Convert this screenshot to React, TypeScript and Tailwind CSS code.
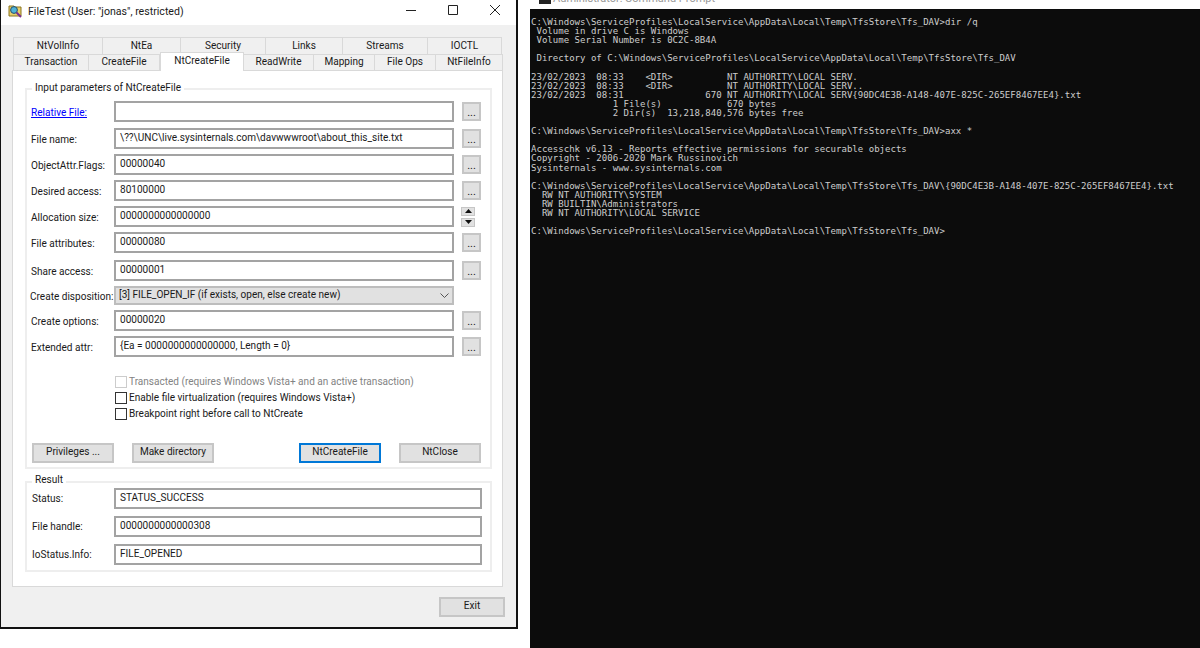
const tabsTop = [
  { label: "NtVolInfo", width: "w-[90px]" },
  { label: "NtEa", width: "w-[78px]" },
  { label: "Security", width: "w-[85px]" },
  { label: "Links", width: "w-[77px]" },
  { label: "Streams", width: "w-[85px]" },
  { label: "IOCTL", width: "w-[74px]" },
];

const tabsBottom = [
  { label: "Transaction", width: "w-[76px]" },
  { label: "CreateFile", width: "w-[71px]" },
  { label: "NtCreateFile", width: "w-[84px]", active: true },
  { label: "ReadWrite", width: "w-[70px]" },
  { label: "Mapping", width: "w-[61px]" },
  { label: "File Ops", width: "w-[61px]" },
  { label: "NtFileInfo", width: "w-[67px]" },
];

const consoleLines = [
  "C:\\Windows\\ServiceProfiles\\LocalService\\AppData\\Local\\Temp\\TfsStore\\Tfs_DAV>dir /q",
  " Volume in drive C is Windows",
  " Volume Serial Number is 0C2C-8B4A",
  "",
  " Directory of C:\\Windows\\ServiceProfiles\\LocalService\\AppData\\Local\\Temp\\TfsStore\\Tfs_DAV",
  "",
  "23/02/2023  08:33    <DIR>          NT AUTHORITY\\LOCAL SERV.",
  "23/02/2023  08:33    <DIR>          NT AUTHORITY\\LOCAL SERV..",
  "23/02/2023  08:31               670 NT AUTHORITY\\LOCAL SERV{90DC4E3B-A148-407E-825C-265EF8467EE4}.txt",
  "               1 File(s)            670 bytes",
  "               2 Dir(s)  13,218,840,576 bytes free",
  "",
  "C:\\Windows\\ServiceProfiles\\LocalService\\AppData\\Local\\Temp\\TfsStore\\Tfs_DAV>axx *",
  "",
  "Accesschk v6.13 - Reports effective permissions for securable objects",
  "Copyright - 2006-2020 Mark Russinovich",
  "Sysinternals - www.sysinternals.com",
  "",
  "C:\\Windows\\ServiceProfiles\\LocalService\\AppData\\Local\\Temp\\TfsStore\\Tfs_DAV\\{90DC4E3B-A148-407E-825C-265EF8467EE4}.txt",
  "  RW NT AUTHORITY\\SYSTEM",
  "  RW BUILTIN\\Administrators",
  "  RW NT AUTHORITY\\LOCAL SERVICE",
  "",
  "C:\\Windows\\ServiceProfiles\\LocalService\\AppData\\Local\\Temp\\TfsStore\\Tfs_DAV>",
];

const inputClass =
  "flex h-[21px] w-[340px] items-center border-2 border-[#a3a3a3] bg-white pb-[2px] pl-[4px] whitespace-nowrap";
const buttonClass =
  "flex items-center justify-center border-2 border-[#c6c6c6] bg-[#e1e1e1] pb-[2px] text-[#1a1a1a]";

function Tab({ label, width, active, short }: { label: string; width: string; active?: boolean; short?: boolean }) {
  if (active) {
    return (
      <div
        className={`${width} relative z-10 -mt-[2px] flex h-[19px] items-center justify-center border border-b-0 border-[#d9d9d9] bg-white pb-[3px]`}
      >
        {label}
      </div>
    );
  }
  return (
    <div
      className={`${width} flex ${short ? "h-[16px] pb-[1px]" : "h-[17px]"} items-center justify-center border-t border-r border-[#d9d9d9] bg-[#f0f0f0] first:border-l`}
    >
      {label}
    </div>
  );
}

function Dots() {
  return (
    <button className="ml-[8px] flex h-[19px] w-[19px] items-center justify-center border-2 border-[#c6c6c6] bg-[#e1e1e1] pt-[3px] text-[11px] text-[#1a1a1a]">
      ...
    </button>
  );
}

function Field({
  label,
  value,
  gap,
  link,
  extra,
}: {
  label: string;
  value?: string;
  gap: string;
  link?: boolean;
  extra?: React.ReactNode;
}) {
  return (
    <div className={`flex h-[21px] items-center ${gap}`}>
      <div className={`w-[87px] pt-[3px] pl-[4px] whitespace-nowrap ${link ? "text-[#0000ff] underline" : ""}`}>{label}</div>
      <div className={inputClass}>{value}</div>
      {extra ?? <Dots />}
    </div>
  );
}

function Check({ label, disabled, first }: { label: string; disabled?: boolean; first?: boolean }) {
  return (
    <div className={`ml-[88px] flex h-[16px] items-center gap-[2px] ${first ? "mt-[17px]" : ""} ${disabled ? "text-[#838383]" : ""}`}>
      <span className={`h-[12px] w-[12px] border ${disabled ? "border-[#cccccc]" : "border-[#333333]"}`}></span>
      <span className="whitespace-nowrap">{label}</span>
    </div>
  );
}

function ResultRow({ label, value, gap }: { label: string; value: string; gap: string }) {
  return (
    <div className={`flex h-[21px] items-center ${gap}`}>
      <div className="w-[87px] pt-[1px] pl-[5px]">{label}</div>
      <div className="flex h-[21px] w-[368px] items-center border-2 border-[#a3a3a3] bg-white pb-[2px] pl-[4px]">{value}</div>
    </div>
  );
}

function Spinner() {
  return (
    <div className="ml-[7px] flex w-[14px] flex-col gap-[2px]">
      <div className="flex h-[9px] items-center justify-center border border-[#c6c6c6] bg-[#e1e1e1]">
        <svg width="7" height="4" viewBox="0 0 7 4"><path d="M3.5 0L7 4H0z" fill="#111" /></svg>
      </div>
      <div className="flex h-[9px] items-center justify-center border border-[#c6c6c6] bg-[#e1e1e1]">
        <svg width="7" height="4" viewBox="0 0 7 4"><path d="M0 0h7L3.5 4z" fill="#111" /></svg>
      </div>
    </div>
  );
}

function AppIcon() {
  return (
    <svg width="15" height="14" viewBox="0 0 15 14">
      <path d="M1 2h5l1 1h6v9H1z" fill="#e8cf6a" stroke="#8a7420" />
      <circle cx="6" cy="6" r="3.4" fill="#4fb3d9" stroke="#25506b" />
      <path d="M8.5 8.5l4.5 4.5" stroke="#7b2f8f" strokeWidth="2" />
    </svg>
  );
}

export default function App() {
  return (
    <div className="flex h-[648px] w-[1200px] overflow-hidden bg-white font-['Roboto','Open_Sans',sans-serif] text-[10.05px] text-[#1a1a1a]">
      {/* FileTest window */}
      <div className="h-[629px] w-[518px] shrink-0 border-r-2 border-b-2 border-l border-[#111111] bg-[#f0f0f0]">
        <div className="flex h-[25px] items-center bg-white pl-[7px]">
          <div className="mb-[3px] flex items-center">
            <AppIcon />
            <span className="mt-[1px] ml-[5px] text-[10.6px] whitespace-nowrap">FileTest (User: "jonas", restricted)</span>
          </div>
          <div className="mb-[5px] ml-auto flex items-center">
            <div className="flex h-[20px] w-[42px] items-center justify-center">
              <svg width="10" height="10" viewBox="0 0 10 10"><path d="M0 5.5h10" stroke="#222" /></svg>
            </div>
            <div className="flex h-[20px] w-[42px] items-center justify-center">
              <svg width="10" height="10" viewBox="0 0 10 10"><path d="M.5.5h9v9h-9z" fill="none" stroke="#222" /></svg>
            </div>
            <div className="flex h-[20px] w-[42px] items-center justify-center">
              <svg width="10" height="10" viewBox="0 0 10 10"><path d="M0 0l10 10M10 0L0 10" stroke="#222" /></svg>
            </div>
          </div>
        </div>

        <div className="ml-[11px] w-[491px] pt-[12px]">
          <div className="flex pl-[1px]">
            {tabsTop.map((t) => (
              <Tab key={t.label} {...t} />
            ))}
          </div>
          <div className="flex h-[16px] items-start pl-[1px]">
            {tabsBottom.map((t) => (
              <Tab key={t.label} {...t} short />
            ))}
          </div>

          {/* tab page */}
          <div className="h-[517px] border border-[#d9d9d9] bg-white px-[12px] pt-[17px]">
            <div className="relative h-[381px] w-[467px] border-2 border-[#eeeeee] pt-[11px]">
              <span className="absolute -top-[10px] left-[5px] bg-white px-[3px] whitespace-nowrap">
                Input parameters of NtCreateFile
              </span>
              <Field label="Relative File:" gap="" link />
              <Field label="File name:" value="\??\UNC\live.sysinternals.com\davwwwroot\about_this_site.txt" gap="mt-[6px]" />
              <Field label="ObjectAttr.Flags:" value="00000040" gap="mt-[5px]" />
              <Field label="Desired access:" value="80100000" gap="mt-[5px]" />
              <Field label="Allocation size:" value="0000000000000000" gap="mt-[5px]" extra={<Spinner />} />
              <Field label="File attributes:" value="00000080" gap="mt-[5px]" />
              <Field label="Share access:" value="00000001" gap="mt-[7px]" />
              <div className="mt-[5px] flex h-[21px] items-start">
                <div className="w-[87px] pt-[3px] pl-[3px] whitespace-nowrap">Create disposition:</div>
                <div className="flex h-[19px] w-[340px] items-center justify-between border-2 border-[#bdbdbd] bg-[#e1e1e1] pr-[3px] pb-[1px] pl-[3px]">
                  <span>[3] FILE_OPEN_IF (if exists, open, else create new)</span>
                  <svg width="9" height="5" viewBox="0 0 9 5">
                    <path d="M.5.5l4 4 4-4" fill="none" stroke="#555" />
                  </svg>
                </div>
              </div>
              <Field label="Create options:" value="00000020" gap="mt-[3px]" />
              <Field label="Extended attr:" value="{Ea = 0000000000000000, Length = 0}" gap="mt-[5px]" />

              <Check label="Transacted (requires Windows Vista+ and an active transaction)" disabled first />
              <Check label="Enable file virtualization (requires Windows Vista+)" />
              <Check label="Breakpoint right before call to NtCreate" />

              <div className="mt-[21px] flex pl-[5px]">
                <button className={`${buttonClass} h-[20px] w-[82px]`}>Privileges ...</button>
                <button className={`${buttonClass} ml-[18px] h-[20px] w-[82px]`}>Make directory</button>
                <button className="ml-[85px] flex h-[20px] w-[82px] items-center justify-center border-2 border-[#0078d7] bg-[#e1e1e1] pb-[2px]">
                  NtCreateFile
                </button>
                <button className={`${buttonClass} ml-[18px] h-[20px] w-[82px]`}>NtClose</button>
              </div>
            </div>

            <div className="relative mt-[12px] h-[91px] w-[467px] border-2 border-[#eeeeee] pt-[5px]">
              <span className="absolute -top-[11px] left-[5px] bg-white px-[3px]">Result</span>
              <ResultRow label="Status:" value="STATUS_SUCCESS" gap="" />
              <ResultRow label="File handle:" value="0000000000000308" gap="mt-[7px]" />
              <ResultRow label="IoStatus.Info:" value="FILE_OPENED" gap="mt-[7px]" />
            </div>
          </div>

          <div className="flex justify-end pt-[10px]">
            <button className={`${buttonClass} -mr-[2px] h-[20px] w-[66px]`}>Exit</button>
          </div>
        </div>
      </div>

      {/* Command prompt */}
      <div className="ml-[12px] flex h-[648px] flex-1 flex-col">
        <div className="flex h-[9px] overflow-hidden pl-[9px]">
          <div className="h-[4px] w-[12px] bg-[#222222]"></div>
          <span className="-mt-[9px] ml-[2px] text-[11px] whitespace-nowrap text-[#9a9a9a]">Administrator: Command Prompt</span>
        </div>
        <pre className="flex-1 bg-[#0c0c0c] pt-[9px] pl-[1px] font-['DejaVu_Sans_Mono',monospace] text-[9.05px] leading-[9.1px] text-[#cccccc]">
          {consoleLines.join("\n")}
        </pre>
      </div>
    </div>
  );
}
